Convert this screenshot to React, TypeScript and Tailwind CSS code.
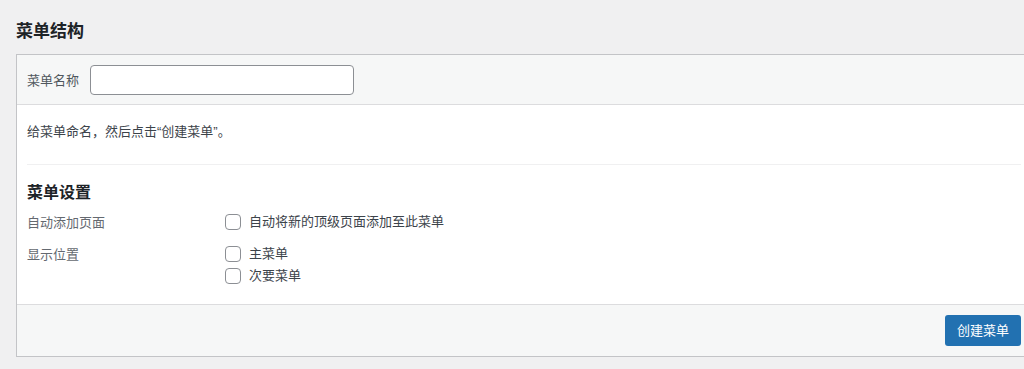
const font = "font-['Liberation_Sans','Noto_Sans_CJK_SC',sans-serif]";

const Check = ({ label }: { label: string }) => (
  <label className="flex h-[22px] items-center gap-2 text-[13px] leading-5 text-[#3c434a]">
    <span className="h-4 w-4 shrink-0 rounded-[4px] border border-[#8c8f94] bg-white" />
    {label}
  </label>
);

const App = () => {
  return (
    <div className={`h-[369px] w-[1024px] overflow-hidden bg-[#f0f0f1] ${font}`}>
      <h2 className="ml-4 pt-[20px] text-[17px] font-bold leading-6 text-[#1d2327]">菜单结构</h2>
      <div className="ml-4 mt-[10px] w-[1016px] border border-[#c3c4c7] bg-white">
        <div className="flex h-[50px] items-center gap-[11px] border-b border-[#dcdcde] bg-[#f6f7f7] px-[10px]">
          <span className="pt-[2px] text-[13px] text-[#50575e]">菜单名称</span>
          <input className="h-[30px] w-[264px] rounded-[4px] border border-[#8c8f94] bg-white px-2 text-[13px] outline-none" />
        </div>
        <div className="px-[10px] pb-[17px] pt-[17px]">
          <p className="text-[13px] leading-5 text-[#3c434a]">给菜单命名，然后点击“创建菜单”。</p>
          <div className="mt-[22px] h-px bg-[#f0f0f1]" />
          <h3 className="mt-[16px] text-[16px] font-bold leading-6 text-[#1d2327]">菜单设置</h3>
          <div className="mt-[6px] flex">
            <span className="w-[198px] pt-[2px] text-[13px] leading-5 text-[#646970]">自动添加页面</span>
            <Check label="自动将新的顶级页面添加至此菜单" />
          </div>
          <div className="mt-[10px] flex">
            <span className="w-[198px] pt-[2px] text-[13px] leading-5 text-[#646970]">显示位置</span>
            <div className="flex flex-col">
              <Check label="主菜单" />
              <Check label="次要菜单" />
            </div>
          </div>
        </div>
        <div className="flex h-[52px] items-center border-t border-[#dcdcde] bg-[#f6f7f7] pr-[10px]">
          <button className="ml-[928px] h-[31px] w-[76px] rounded-[3px] bg-[#2271b1] text-[13px] text-white">创建菜单</button>
        </div>
      </div>
    </div>
  );
};

export default App;
